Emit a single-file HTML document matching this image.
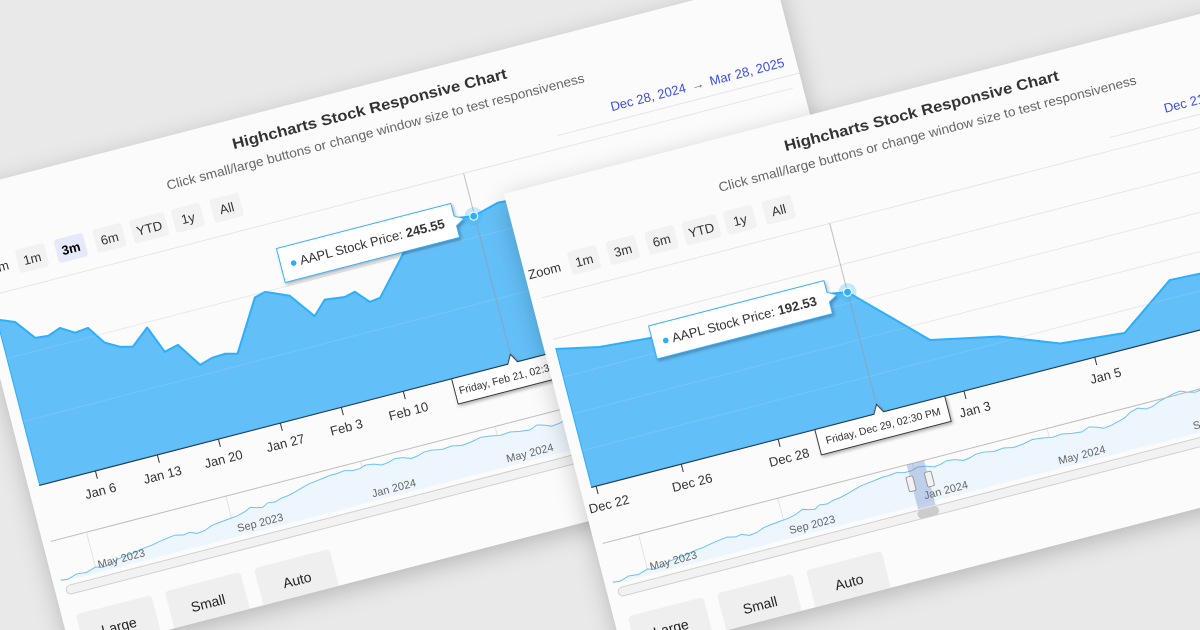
<!DOCTYPE html>
<html><head><meta charset="utf-8"><style>
html,body{margin:0;padding:0;background:#e9e9e9;overflow:hidden}
svg{display:block}
text{font-family:"Liberation Sans",sans-serif}
</style></head><body>
<svg width="1200" height="630" viewBox="0 0 1200 630" xmlns="http://www.w3.org/2000/svg">
<defs>
<filter id="sh" x="-10%" y="-10%" width="120%" height="130%"><feDropShadow dx="0" dy="6" stdDeviation="12" flood-color="#000" flood-opacity="0.22"/></filter>
<filter id="ts" x="-20%" y="-30%" width="140%" height="170%"><feDropShadow dx="1" dy="2" stdDeviation="1.5" flood-color="#000" flood-opacity="0.3"/></filter>
<clipPath id="cc"><rect x="0" y="0" width="850" height="478"/></clipPath>
<clipPath id="pc"><rect x="11" y="100" width="829" height="206"/></clipPath>
<g id="nav">
  <g stroke="#e2e2e2" stroke-width="1">
    <line x1="45" y1="363" x2="45" y2="405"/><line x1="189" y1="363" x2="189" y2="405"/>
    <line x1="328" y1="363" x2="328" y2="405"/><line x1="467" y1="363" x2="467" y2="405"/>
    <line x1="606" y1="363" x2="606" y2="405"/><line x1="745" y1="363" x2="745" y2="405"/>
  </g>
  <polygon fill="#eef6fd" points="8,405 8,403 25,401 45,399 60,400 75,396 95,393 115,390 130,388 145,389 160,391 175,387 195,385 210,380 222,383 235,381 250,378 265,374 280,371 295,369 310,368 325,370 340,369 355,371 370,370 385,372 400,370 420,371 440,372 460,371 480,372 500,375 515,374 530,376 545,372 560,366 575,368 590,363 605,360 620,365 640,364 660,362 680,366 700,363 720,365 740,368 760,364 780,366 800,362 820,363 840,364 840,405"/>
  <polyline fill="none" stroke="#6cc3f7" stroke-width="1" points="8,403 15,404 25,401 35,402 45,399 52,401 60,400 68,397 75,396 85,395 95,393 105,392 115,390 122,389 130,388 138,390 145,389 152,392 160,391 168,388 175,387 185,386 195,385 203,383 210,380 216,382 222,383 228,380 235,381 242,379 250,378 258,376 265,374 272,372 280,371 288,370 295,369 302,369 310,368 318,370 325,370 332,368 340,369 348,372 355,371 362,369 370,370 378,373 385,372 392,370 400,370 410,372 420,371 430,373 440,372 450,370 460,371 470,373 480,372 490,374 500,375 508,372 515,374 522,377 530,376 538,374 545,372 552,368 560,366 568,369 575,368 582,365 590,363 598,361 605,360 612,363 620,365 630,363 640,364 650,361 660,362 670,365 680,366 690,362 700,363 710,366 720,365 730,367 740,368 750,365 760,364 770,367 780,366 790,363 800,362 810,364 820,363 830,365 840,364"/>
  <line x1="8" y1="363" x2="842" y2="363" stroke="#bdbdbd" stroke-width="1"/>
  <g font-size="11" fill="#666">
    <text x="48" y="401">May 2023</text><text x="192" y="401">Sep 2023</text>
    <text x="331" y="401">Jan 2024</text><text x="470" y="401">May 2024</text>
    <text x="609" y="401">Sep 2024</text><text x="748" y="401">Jan 2025</text>
  </g>
  <rect x="11" y="410" width="829" height="9" rx="4.5" fill="#f2f2f2" stroke="#d0d0d0" stroke-width="1"/>
</g>
<g id="btns" font-size="13" fill="#333" text-anchor="middle">
  <text x="20" y="89">Zoom</text>
  <rect x="46" y="72" width="30" height="24" rx="3" fill="#f2f2f2"/><text x="61" y="89">1m</text>
  <rect x="86" y="72" width="30" height="24" rx="3" fill="#f2f2f2"/>
  <rect x="126" y="72" width="30" height="24" rx="3" fill="#f2f2f2"/><text x="141" y="89">6m</text>
  <rect x="164" y="72" width="36" height="24" rx="3" fill="#f2f2f2"/><text x="182" y="89">YTD</text>
  <rect x="207" y="72" width="30" height="24" rx="3" fill="#f2f2f2"/><text x="222" y="89">1y</text>
  <rect x="247" y="72" width="30" height="24" rx="3" fill="#f2f2f2"/><text x="262" y="89">All</text>
</g>
<g id="head">
  <rect x="0" y="0" width="850" height="478" fill="#fbfbfb"/>
  <text x="425" y="29" text-anchor="middle" font-size="15" font-weight="bold" fill="#333" textLength="283" lengthAdjust="spacingAndGlyphs">Highcharts Stock Responsive Chart</text>
  <text x="425" y="52" text-anchor="middle" font-size="13" fill="#666" textLength="431" lengthAdjust="spacingAndGlyphs">Click small/large buttons or change window size to test responsiveness</text>
  <g stroke="#e6e6e6" stroke-width="1">
    <line x1="11" y1="110" x2="840" y2="110"/>
  </g>
  <g font-size="14" fill="#222" text-anchor="middle">
    <rect x="14" y="440" width="78" height="48" rx="4" fill="#efefef"/><text x="53" y="467">Large</text>
    <rect x="106" y="440" width="78" height="48" rx="4" fill="#efefef"/><text x="145" y="467">Small</text>
    <rect x="198" y="440" width="78" height="48" rx="4" fill="#efefef"/><text x="237" y="467">Auto</text>
  </g>
</g>
</defs>

<!-- CARD 1 -->
<g transform="translate(-48,192) rotate(-14.5)">
  <rect x="0" y="0" width="850" height="478" fill="#fbfbfb" filter="url(#sh)"/>
  <g clip-path="url(#cc)">
    <use href="#head"/>
    <use href="#btns"/>
    <rect x="86" y="72" width="30" height="24" rx="3" fill="#e6e9fb"/>
    <text x="101" y="89" text-anchor="middle" font-size="13" font-weight="bold" fill="#000">3m</text>
    <g font-size="13" fill="#3b4cf0" text-anchor="end">
      <text x="838" y="87"><tspan>Dec 28, 2024</tspan><tspan fill="#666" dx="6">→</tspan><tspan dx="6">Mar 28, 2025</tspan></text>
    </g>
    <line x1="600" y1="97" x2="850" y2="97" stroke="#e6e6e6"/>
    <g stroke="#e6e6e6"><line x1="11" y1="175" x2="840" y2="175"/><line x1="11" y1="240" x2="840" y2="240"/></g>
    <g clip-path="url(#pc)">
      <path fill="#63bff7" stroke="#2caffe" stroke-width="2" stroke-linejoin="round" d="M11,306 L11,136 L14.5,136 L28.5,141.6 L44,162 L57,163.4 L70.5,158.6 L84,167 L97.6,165.6 L110,184 L124,192 L136.5,195 L155,180 L166,208 L180.5,204.6 L197,229.5 L210,225.7 L224,225 L236,228 L266.8,178 L278,175 L301,185 L320,211 L334,197.5 L354,200 L365,197.5 L377,211 L388,209.6 L422,172 L460,160 L485,152 L499,154 L526,147 L539,148 L560,168 L600,190 L700,230 L760,250 L840,240 L840,306 Z"/>
      <g stroke="#ffffff" stroke-opacity="0.12"><line x1="11" y1="175" x2="840" y2="175"/><line x1="11" y1="240" x2="840" y2="240"/></g>
    </g>
    <line x1="500" y1="110" x2="500" y2="306" stroke="#999" stroke-opacity="0.6"/>
    <circle cx="499" cy="154" r="9" fill="#2caffe" fill-opacity="0.25"/>
    <circle cx="499" cy="154" r="4" fill="#2caffe" stroke="#fff" stroke-width="1"/>
    <line x1="11" y1="306" x2="840" y2="306" stroke="#333"/>
    <g stroke="#333"><line x1="69" y1="306" x2="69" y2="314"/><line x1="133" y1="306" x2="133" y2="314"/><line x1="196" y1="306" x2="196" y2="314"/><line x1="260" y1="306" x2="260" y2="314"/><line x1="323" y1="306" x2="323" y2="314"/><line x1="387" y1="306" x2="387" y2="314"/></g>
    <g font-size="13" fill="#333" text-anchor="middle">
      <text x="69" y="331">Jan 6</text><text x="133" y="331">Jan 13</text><text x="196" y="331">Jan 20</text><text x="260" y="331">Jan 27</text><text x="323" y="331">Feb 3</text><text x="387" y="331">Feb 10</text>
    </g>
    <use href="#nav"/>
    <path d="M300,136 L480,136 L480,149 L489,154 L480,159 L480,171 L300,171 Z" fill="#fff" stroke="#2caffe" stroke-width="1" filter="url(#ts)"/>
    <text x="309" y="158" font-size="13" fill="#333"><tspan fill="#2caffe">●</tspan> AAPL Stock Price: <tspan font-weight="bold">245.55</tspan></text>
    <path d="M437,306 L495,306 L500,297 L505,306 L563,306 L563,332 L437,332 Z" fill="#fff" stroke="#333" stroke-width="1" filter="url(#ts)"/>
    <text x="500" y="323" font-size="10.5" fill="#333" text-anchor="middle">Friday, Feb 21, 02:30 PM</text>
  </g>
</g>

<!-- CARD 2 -->
<g transform="translate(504,194) rotate(-14.5)">
  <rect x="0" y="0" width="850" height="478" fill="#fbfbfb" filter="url(#sh)"/>
  <g clip-path="url(#cc)">
    <use href="#head"/>
    <use href="#btns"/>
    <text x="101" y="89" text-anchor="middle" font-size="13" fill="#333">3m</text>
    <g font-size="13" fill="#3b4cf0" text-anchor="end">
      <text x="838" y="87"><tspan>Dec 21, 2023</tspan><tspan fill="#666" dx="6">→</tspan><tspan dx="6">Jan 21, 2024</tspan></text>
    </g>
    <line x1="600" y1="97" x2="850" y2="97" stroke="#e6e6e6"/>
    <g stroke="#e6e6e6"><line x1="11" y1="153" x2="840" y2="153"/><line x1="11" y1="192" x2="840" y2="192"/><line x1="11" y1="230" x2="840" y2="230"/><line x1="11" y1="268" x2="840" y2="268"/></g>
    <g clip-path="url(#pc)">
      <path fill="#63bff7" stroke="#2caffe" stroke-width="2" stroke-linejoin="round" d="M11,306 L11,163 L54,172 L105,176 L155,176 L205,172 L245,171 L308,181 L376,248 L444,262 L501,284 L566,290 L623,250 L690,253 L750,245 L840,240 L840,306 Z"/>
      <g stroke="#ffffff" stroke-opacity="0.12"><line x1="11" y1="192" x2="840" y2="192"/><line x1="11" y1="230" x2="840" y2="230"/><line x1="11" y1="268" x2="840" y2="268"/></g>
    </g>
    <line x1="308" y1="110" x2="308" y2="306" stroke="#999" stroke-opacity="0.6"/>
    <circle cx="308" cy="181" r="9" fill="#2caffe" fill-opacity="0.25"/>
    <circle cx="308" cy="181" r="4" fill="#2caffe" stroke="#fff" stroke-width="1"/>
    <line x1="11" y1="306" x2="840" y2="306" stroke="#333"/>
    <g stroke="#333"><line x1="16" y1="306" x2="16" y2="314"/><line x1="104" y1="306" x2="104" y2="314"/><line x1="204" y1="306" x2="204" y2="314"/><line x1="396" y1="306" x2="396" y2="314"/><line x1="531" y1="306" x2="531" y2="314"/><line x1="690" y1="306" x2="690" y2="314"/></g>
    <g font-size="13" fill="#333" text-anchor="middle">
      <text x="24" y="331">Dec 22</text><text x="110" y="331">Dec 26</text><text x="210" y="331">Dec 28</text><text x="402" y="331">Jan 3</text><text x="537" y="331">Jan 5</text><text x="696" y="331">Jan 9</text>
    </g>
    <use href="#nav"/>
    <rect x="322" y="363" width="18" height="46" fill="#6685c2" fill-opacity="0.35"/>
    <rect x="318" y="375" width="7" height="15" rx="1.5" fill="#f2f2f2" stroke="#999"/>
    <rect x="337" y="375" width="7" height="15" rx="1.5" fill="#f2f2f2" stroke="#999"/>
    <rect x="320" y="410" width="22" height="9" rx="4.5" fill="#cccccc"/>
    <path d="M107,164 L288,164 L288,176 L297,181 L288,186 L288,198 L107,198 Z" fill="#fff" stroke="#2caffe" stroke-width="1" filter="url(#ts)"/>
    <text x="116" y="186" font-size="13" fill="#333"><tspan fill="#2caffe">●</tspan> AAPL Stock Price: <tspan font-weight="bold">192.53</tspan></text>
    <path d="M242,306 L303,306 L308,297 L313,306 L376,306 L376,332 L242,332 Z" fill="#fff" stroke="#333" stroke-width="1" filter="url(#ts)"/>
    <text x="309" y="323" font-size="10.5" fill="#333" text-anchor="middle">Friday, Dec 29, 02:30 PM</text>
  </g>
</g>
</svg>
</body></html>
